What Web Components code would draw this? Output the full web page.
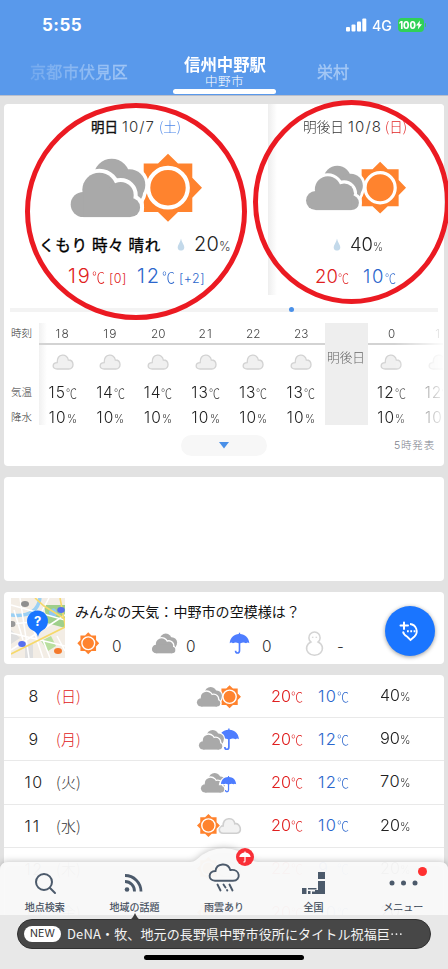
<!DOCTYPE html>
<html lang="ja">
<head>
<meta charset="utf-8">
<title>天気</title>
<style>
html,body{margin:0;padding:0;background:#e2e2e2}
body{font-family:Inter,"Noto Sans CJK JP",sans-serif;width:448px;height:969px;overflow:hidden}
</style>
</head>
<body>
<weather-app></weather-app>
<script>
const define=(name,make,after)=>customElements.define(name,class extends HTMLElement{
  constructor(){super();this.attachShadow({mode:'open'});}
  connectedCallback(){
    if(this.ready)return;this.ready=true;
    this.shadowRoot.innerHTML=make(this);
    if(after)after(this);
  }
});

/* text run: gap before, text, target width, size, colour, weight */
const T=(g,text,w,size,color='#333',weight=300,extra='')=>
  `<fit-text w="${w}" style="margin-left:${g}px;font-size:${text==='℃'?size*1.15:size}px;color:${color};font-weight:${weight};${extra}">${text}</fit-text>`;
const RED='#e02020',BLUE='#2b66cc',JP="font-family:'Noto Sans CJK JP',sans-serif;",MED='-webkit-text-stroke:.35px currentColor;';

/* icon parts */
const backCloud='<circle cx="43.7" cy="26.7" r="18"/><circle cx="61.5" cy="35" r="15.8"/><circle cx="62" cy="42" r="13"/>';
const frontCloud='<circle cx="31.3" cy="39.7" r="17"/><circle cx="52.7" cy="45" r="13"/><circle cx="15.3" cy="54.5" r="12.6"/><circle cx="62.4" cy="57.4" r="9.7"/><rect x="15.3" y="42" width="47" height="25.1"/>';
const clouds=`<g fill="#fff" stroke="#fff" stroke-width="7">${backCloud}</g><g fill="#a9a9a9">${backCloud}</g><g fill="#fff" stroke="#fff" stroke-width="8">${frontCloud}</g><g fill="#a9a9a9">${frontCloud}</g>`;
const sun=(x,y)=>`<g transform="translate(${x} ${y})"><path fill="#ff832e" d="M-24.3-24.3H-10L0-34 10-24.3H24.3V-10L34 0 24.3 10V24.3H10L0 34-10 24.3H-24.3V10L-34 0-24.3-10z"/><circle r="19.8" fill="none" stroke="#fff" stroke-width="4.2"/></g>`;
const umbrella=(x,y,s)=>`<g transform="translate(${x} ${y}) scale(${s})"><path fill="#4e7dff" d="M-30 0C-28-19-16-27-2-28V-32H2V-28C16-27 28-19 30 0Q25-4 20 0Q12-4 3 0H-3Q-12-4-20 0Q-25-4-30 0z"/><path d="M0-3V23Q0 30-6.500 30Q-12 30-12 23" fill="none" stroke="#4e7dff" stroke-width="5"/></g>`;
const pale=(t)=>`<g transform="${t}"><path d="M15 65C-1 65 0 43 15 43C15 17 47 15 51 37C67 32 76 65 56 65z" fill="#f2f2f2" stroke="#cfcfcf" stroke-width="5"/></g>`;
const kinds={
  'cloud-sun':()=>['0 0 140 74',sun(100,37.7)+clouds],
  'cloud-rain':()=>['0 0 140 74',umbrella(92,36,1)+clouds],
  'cloud-drizzle':()=>['0 0 140 74',clouds+'<path d="M56 45C58 28 70 18 85 18V45z" fill="#fff"/><path d="M60 45H78V70H60z" fill="#fff" opacity="0"/>'+umbrella(85,42,.76)],
  'sun-cloud':()=>['0 0 140 74',pale('translate(66 -5) scale(.98 1)')+`<g fill="#fff"><path transform="translate(37 37)" d="M-28-28H-11L0-38 11-28H28V-11L38 0 28 11V28H11L0 38-11 28H-28z"/></g>`+sun(37,37)],
  'sun':()=>['0 0 70 70',sun(35,35)],
  'clouds':()=>['0 4 80 68',clouds],
  'umbrella':()=>['0 0 64 70',umbrella(32,34,1)],
  'overcast':()=>['0 0 22 17','<path d="M5.200 15C-.2 15-.2 8.800 5.200 8.600C5-1 15.500-.8 16.300 6C22.500 6 22.500 15 16.800 15z" fill="#f0f0f0" stroke="#d2d2d2" stroke-width="1.300"/>'],
  'snowman':()=>['0 0 18 24','<g fill="none" stroke="#d4d4d4" stroke-width="1.500"><path d="M5.500 10.500A5.400 5.400 0 1 1 12.500 10.500A7.600 6.800 0 1 1 5.500 10.500z"/></g><path d="M6.500 6h1.500M10 6h1.500" stroke="#d0d0d0"/>'],
  'drop':()=>['0 0 8 14','<path d="M4 0.500Q4.400 3 6.300 6.500C9.200 11.500 6.500 13.500 4 13.500S-1.200 11.500 1.700 6.500Q3.600 3 4 .5z" fill="#c3d9ea"/>']
};
define('weather-icon',el=>{
  const [vb,body]=kinds[el.getAttribute('kind')]();
  return `<style>:host{display:block;flex:none}svg{display:block;overflow:visible}</style><svg width="${el.getAttribute('w')}" height="${el.getAttribute('h')}" viewBox="${vb}">${body}</svg>`;
});

define('status-bar',()=>`<style>
:host{display:flex;height:50px;align-items:center;box-sizing:border-box;padding:0 22px 0 42px;color:#fff}
.g{flex:1}.bat{display:flex;align-items:center;justify-content:center;width:26px;height:14px;border-radius:4px;background:#30d158;margin-left:6px}
.nub{width:1.5px;height:4px;border-radius:0 2px 2px 0;background:#30d158;margin-left:1px}
</style>${T(0,'5:55',40,17,'#fff',700)}<span class="g"></span>
<svg width="21" height="14" viewBox="0 0 21 14" fill="#fff"><rect x="0" y="9" width="4" height="4.500" rx="1"/><rect x="5.500" y="6.500" width="4" height="7" rx="1"/><rect x="11" y="3.500" width="4" height="10" rx="1"/><rect x="16.300" y="0.500" width="4" height="13" rx="1"/></svg>
${T(5,'4G',20,14.500,'#fff',500)}<span class="bat">${T(0,'100',17,10.500,'#fff',800)}<svg width="6" height="10" viewBox="0 0 6 10"><path fill="#fff" d="M4 0.500 0 5.500H2.500L1.800 9.500 6 4.200H3.500z"/></svg></span><span class="nub"></span>`);

define('city-tabs',()=>`<style>
:host{display:grid;grid-template-columns:173px 103px 1fr;height:45px}
.side{padding-top:10px;line-height:24px}
.l{padding-left:30px;-webkit-mask-image:linear-gradient(90deg,transparent 0,rgba(0,0,0,.45) 40px,#000 130px);mask-image:linear-gradient(90deg,transparent 0,rgba(0,0,0,.45) 40px,#000 130px)}
.r{padding-left:41px}
.m{display:flex;flex-direction:column;align-items:center}
.u{width:103px;height:5px;border-radius:3px;background:#fff;margin-top:auto;margin-bottom:1px}
</style><div class="side l">${T(0,'京都市伏見区',98,16,'#a4c8f5',400,MED)}</div>
<div class="m">${T(0,'信州中野駅',82,16.500,'#fff',700,'line-height:20px;margin-top:5px;')}${T(0,'中野市',39,12.500,'#fff',300,'line-height:13px;')}<span class="u"></span></div>
<div class="side r">${T(0,'栄村',32,16,'#a4c8f5',400,MED)}</div>`);

define('wx-card',()=>`<style>:host{display:block;box-sizing:border-box;width:440px;background:#fff;border-radius:4px;margin:0 4px;overflow:hidden;flex:none}</style><slot></slot>`);

define('day-panel',el=>{
  const a=el.getAttribute('day')==='tomorrow';
  return `<style>:host{display:block;height:191px;width:${a?264:176}px;flex:none;box-sizing:border-box}
:host([day=after]){background:linear-gradient(90deg,#eee 0,#fff 9px)}
.r{display:flex;align-items:baseline;height:24px;line-height:24px}
.i{display:flex;align-items:center;height:74px;margin-top:12px}
weather-icon{align-self:center}</style>
<div class="r" style="padding:10px 0 0 ${a?87:35}px">${a?
 T(0,'明日',27,13.500,'#111',400,MED)+T(4,'10/7',33,15,'#333')+T(4,'(土)',22,13.500,'#4b86e8',300,JP):
 T(0,'明後日',41,13.700,'#333')+T(4,'10/8',34,15,'#333')+T(3,'(日)',22,13.500,RED,300,JP)}</div>
<div class="i" style="padding-left:${a?64:36}px"><weather-icon kind="cloud-sun" w="${a?140:106.6}" h="${a?74:56.4}"></weather-icon></div>
<div class="r" style="margin-top:8px;padding-left:${a?34:65}px">${a?T(0,'くもり 時々 晴れ',122,15.500,'#000',400,JP+'margin-left:1px;'+MED):''}<weather-icon kind="drop" w="8" h="13" style="margin-left:${a?16:0}px"></weather-icon>${
 a?T(9,'20',25,20,'#222')+T(0,'%',12,12.500,'#444'):T(9,'40',23,18.500,'#222')+T(0,'%',10,11.500,'#444')}</div>
<div class="r" style="margin-top:8px;padding-left:${a?63:47}px">${a?
 T(1,'19',24,20,RED)+T(0,'℃',13,13,RED,300,JP)+T(4,'[0]',18,12.500,RED)+T(10,'12',25,20,BLUE)+T(0,'℃',13,13,BLUE,300,JP)+T(4,'[+2]',26,12.500,BLUE):
 T(0,'20',23,18.500,RED)+T(0,'℃',11,11,RED,300,JP)+T(14,'10',22,18.500,BLUE)+T(0,'℃',11,11,BLUE,300,JP)}</div>`;
});

define('day-scroller',()=>`<style>:host{display:flex;align-items:center;margin:12px 6px 0;height:6px;background:linear-gradient(#f3f3f3,#f3f3f3) 0 50%/100% 4px no-repeat}
i{display:block;width:5px;height:5px;border-radius:50%;background:#4a90e8;margin:-1px 0 0 279px}</style><i></i>`);

define('hour-col',el=>`<style>:host{display:flex;flex-direction:column;align-items:center;width:47.600px;flex:none}
.h{height:20px;line-height:22px;border-bottom:2px solid #d3d3d3;align-self:stretch;display:flex;justify-content:center}
weather-icon{margin-top:9px}
.r{display:flex;align-items:baseline;height:25px;line-height:25px}</style>
<div class="h">${T(0,el.getAttribute('t'),el.getAttribute('t').length*7.200,12,'#444')}</div>
<weather-icon kind="overcast" w="22" h="17"></weather-icon>
<div class="r" style="margin-top:9px">${T(0,el.getAttribute('temp'),17.500,15.500,'#222')}${T(0,'℃',11,11,'#333',300,JP)}</div>
<div class="r">${T(0,'10',18,15.500,'#222')}${T(0,'%',10,11,'#333')}</div>`);

define('hour-strip',()=>`<style>:host{display:flex;height:102px;margin-top:10px}
.lab{width:35px;flex:none;display:flex;flex-direction:column;padding-left:7px;box-sizing:border-box;line-height:22px}
.s{display:flex;flex:1;overflow:hidden;-webkit-mask-image:linear-gradient(90deg,#000 355px,transparent 408px);mask-image:linear-gradient(90deg,#000 355px,transparent 408px);margin-right:1px;background:linear-gradient(90deg,#f1f1f1,#fff 8px)}
.d{width:43px;flex:none;background:#eee;display:flex;justify-content:center;padding-top:24px;box-sizing:border-box;line-height:22px}</style>
<div class="lab">${T(0,'時刻',21,10.500,'#333',300)}${T(0,'気温',21,10.500,'#333',300,'margin-top:37px;')}${T(0,'降水',21,10.500,'#333',300,'margin-top:3px;')}</div>
<div class="s">${[18,19,20,21,22,23].map((t,i)=>`<hour-col t="${t}" temp="${[15,14,14,13,13,13][i]}"></hour-col>`).join('')}<div class="d">${T(0,'明後日',38,12.700,'#666')}</div><hour-col t="0" temp="12"></hour-col><hour-col t="1" temp="12"></hour-col></div>`);

define('strip-footer',()=>`<style>:host{display:grid;grid-template-columns:177px 86px 1fr;margin-top:10px;height:21px;line-height:21px}
.p{grid-column:2;border-radius:11px;background:#f7f7f7;display:flex;justify-content:center;align-items:center}
.t{padding-left:127px}</style><div class="p"><svg width="10" height="7"><path d="M0 0H10L5 6.500z" fill="#4a90e8"/></svg></div><div class="t">${T(0,'5時発表',41,10.500,'#7d818c')}</div>`);

define('map-thumb',()=>`<style>:host{display:block;width:54px;height:60px;flex:none}svg{display:block}</style>
<svg width="54" height="60" viewBox="0 0 54 60"><rect width="54" height="60" fill="#f3ede5"/>
<path d="M33 7H54V30L36 25z" fill="#9fcf8b"/><path d="M30 43 40 38 45 48 37 53z" fill="#b9df9f"/><path d="M0 32 9 40 0 46zM14 48 22 46V60H14z" fill="#dedede"/>
<path d="M0 17Q26 20 29 0" fill="none" stroke="#9bd0f4" stroke-width="3.500"/><path d="M38 13Q43 8 45 12T44 19Q38 20 38 13" fill="#8fc8f0"/>
<g fill="none" stroke="#fff" stroke-width="1.500"><path d="M0 7 54 22M9 0 18 60M0 35 54 48M32 60 22 30 38 0M0 52 54 17M39 60 32 42M3 12 12 42M46 38 54 53M0 26 22 24"/></g>
<g fill="none" stroke="#f6d96b" stroke-width="1.600"><path d="M0 56 54 29V21L33 8 24 0M49 0 54 26"/></g>
<ellipse cx="14" cy="6" rx="4" ry="3" fill="#8f8f8f"/><ellipse cx="1" cy="26" rx="3.500" ry="3" fill="#999"/><ellipse cx="50" cy="12" rx="3.800" ry="3" fill="#5670ee"/><ellipse cx="11" cy="46" rx="3.800" ry="3" fill="#5670ee"/><ellipse cx="47" cy="53" rx="4" ry="3" fill="#f47a2c"/>
<path d="M27 39Q26 34 21 32A10.500 10.500 0 1 1 32 32Q28 34 27 39z" fill="#1a75ff"/><text x="26.600" y="28" text-anchor="middle" font-family="Inter" font-weight="700" font-size="13" fill="#fff">?</text></svg>`);

define('everyone-weather',()=>`<style>:host{display:flex;height:73px;padding:6px 0 0 7px;box-sizing:border-box}
.c{margin-left:9px;flex:none;width:300px}.t{display:flex;height:24px;line-height:26px}
.r{display:grid;grid-template-columns:77px 78px 76px 60px;height:26px;margin-top:11px;line-height:27px}
.r>div{display:flex;align-items:center}
.f{width:50px;height:50px;border-radius:50%;background:#1a75ff;box-shadow:0 1px 4px rgba(0,0,0,.4);margin:8px 0 0 11px;display:flex;align-items:center;justify-content:center;flex:none}</style>
<map-thumb></map-thumb><div class="c"><div class="t">${T(1,'みんなの天気：中野市の空模様は？',225,14,'#111',400,JP)}</div>
<div class="r"><div style="padding-left:3px"><weather-icon kind="sun" w="22.500" h="22.500" style="margin-top:-6px"></weather-icon>${T(12.5,'0',10,15.500)}</div>
<div><weather-icon kind="clouds" w="27" h="23" style="margin-top:-6px"></weather-icon>${T(8,'0',10,15.500)}</div>
<div><weather-icon kind="umbrella" w="21" h="23" style="margin-top:-6px"></weather-icon>${T(12,'0',10,15.500)}</div>
<div><weather-icon kind="snowman" w="19" h="25" style="margin-top:-6px"></weather-icon>${T(13,'-',8,15)}</div></div></div>
<div class="f"><svg width="22" height="24" viewBox="0 0 22 24" fill="none" stroke="#fff" stroke-width="2"><path d="M5 3.500V10M1.500 6.500H9" stroke-linecap="round"/><path d="M11 5A7.300 7.300 0 0 1 15.500 17.500L11.500 21 8 17.500Q4.500 15.500 4 12.500" stroke-width="1.800"/><path d="M8 12.300H16.500" stroke-dasharray="1.800 1.500"/></svg></div>`);

define('forecast-row',el=>{
  const g=n=>el.getAttribute(n),day=g('d'),red=el.hasAttribute('holiday'),n=day.length;
  return `<style>:host{display:grid;grid-template-columns:20px 31px 141px 75px 47px 62px 1fr;align-items:center;height:43.200px;box-sizing:border-box;border-bottom:1px solid #e9e9e9;line-height:30px}
div{display:flex;align-items:baseline}</style>
<div style="grid-column:2;justify-content:center;margin-left:-11px">${T(0,day,n>1?19:11,16,'#222')}</div>
<div style="margin-left:1px">${T(0,'('+g('w')+')',25,15,red?RED:'#333',300,JP)}</div>
<div><weather-icon kind="${g('icon')}" w="47" h="25" style="margin-left:${g('icon')==='cloud-drizzle'?4:g('icon')==='cloud-rain'?1.5:0}px"></weather-icon></div>
<div>${T(0,g('hi'),20,16.500,RED)}${T(0,'℃',12,11.500,RED,300,JP)}</div>
<div>${T(0,g('lo'),19,16.500,BLUE)}${T(0,'℃',12,11.500,BLUE,300,JP)}</div>
<div>${T(0,g('p'),20,16.500,'#222')}${T(0,'%',10.500,11.500,'#333')}</div>`;
});

const navIcons={
 search:'<circle cx="19" cy="18" r="8" fill="none" stroke="#4c5a6b" stroke-width="2"/><path d="M25 24 30 29" stroke="#4c5a6b" stroke-width="2" stroke-linecap="round"/>',
 feed:'<circle cx="13" cy="25.500" r="2.300" fill="#4c5a6b"/><g fill="none" stroke="#4c5a6b" stroke-width="2.800"><path d="M11 17.500A9.500 9.500 0 0 1 20.500 27.500M11 11.500A16 16 0 0 1 27 27.500"/></g>',
 rain:'<g transform="translate(0 -2.500)" fill="none" stroke="#4c5a6b" stroke-width="1.900" stroke-linecap="round"><path d="M11 19.200C3.500 19.200 4 9.500 11.500 9.500C12.500 1.500 24 .5 26.300 8.500C36.500 7 37.500 19.200 29 19.200z"/><path d="M13.500 23 16.500 29M19.500 23 21.500 26M23 28.500 23.300 29M25.500 23 28.500 29"/></g>',
 japan:'<g fill="#4c5a6b"><path d="M24 8H31V15H24zM24 17H31V30H21V26H24zM8 24H12.500V30H8zM14 24H22.500V25.500H14zM14 27H16.500V30H14zM18 27.500H21V30H18z"/></g>',
 more:'<g fill="#4c5a6b"><circle cx="9" cy="19" r="2.500"/><circle cx="20.500" cy="19" r="2.500"/><circle cx="32" cy="19" r="2.500"/></g>'
};
define('nav-item',el=>`<style>:host{display:flex;flex-direction:column;align-items:center;width:89.600px;position:relative}
svg{display:block;overflow:visible}::slotted(*){position:absolute}</style><svg width="40" height="34" viewBox="0 0 40 34">${navIcons[el.getAttribute('icon')]}</svg>
${T(0,el.getAttribute('label'),+el.getAttribute('lw'),10,'#3f4b5a',400,'line-height:14px;margin-top:2px;-webkit-text-stroke:.15px currentColor;'+JP)}<slot></slot>`);

define('bottom-nav',()=>`<style>:host{display:block;position:absolute;left:0;top:840px;width:448px;height:75px}
.bg{position:absolute;left:0;top:0;width:448px;height:75px;overflow:hidden}
.bg path{filter:drop-shadow(0 -1px 3px rgba(0,0,0,.22))}
.row{position:relative;display:flex;padding-top:24px}
.dot{width:9px;height:9px;border-radius:50%;background:#ff3030;left:60px;top:3px}
.um{left:57px;top:-16px;width:18px;height:18px}</style>
<svg class="bg" viewBox="0 0 448 75"><path d="M0 85V30Q0 22 8 22H190Q193.500 22 196 20A39 39 0 0 1 252 20Q254.500 22 258 22H440Q448 22 448 30V85z" fill="#fafafa" fill-opacity=".965"/></svg>
<div class="row"><nav-item icon="search" label="地点検索" lw="40"></nav-item><nav-item icon="feed" label="地域の話題" lw="50"></nav-item>
<nav-item icon="rain" label="雨雲あり" lw="40"><svg class="um" width="18" height="18" viewBox="0 0 18 18"><circle cx="9" cy="9" r="9" fill="#f92f37"/><path d="M3.300 9C4 5.500 7 4.500 9 4.200C11 4.500 14 5.500 14.700 9zM8.400 3.500H9.600V13Q9.500 15 7.400 14.400L7.200 13.500Q8.400 13.800 8.400 13z" fill="#fff"/></svg></nav-item>
<nav-item icon="japan" label="全国" lw="20"></nav-item><nav-item icon="more" label="メニュー" lw="40"><span class="dot"></span></nav-item></div>`);

define('news-bar',()=>`<style>:host{display:block;position:absolute;left:0;top:915px;width:448px;height:54px;background:#e8e8e8}
.b{display:flex;align-items:center;box-sizing:border-box;width:414px;height:30px;margin:4px 0 0 17px;border-radius:15px;background:#474747;border:1px solid #303030;padding-left:6px;line-height:24px}
.n{display:flex;justify-content:center;align-items:center;width:37px;height:16px;border-radius:8px;background:#fff;line-height:16px}
.tri{position:absolute;left:129px;top:-2px}
.h{width:160px;height:5px;border-radius:3px;background:#000;margin:6px auto 0}</style>
<svg class="tri" width="12" height="8"><path d="M0 7Q3 7 6 0Q9 7 12 7z" fill="#3c3c3c"/></svg>
<div class="b"><span class="n">${T(0,'NEW',25,10.500,'#333',400)}</span>${T(6,'DeNA・牧、地元の長野県中野市役所にタイトル祝福巨',323,13,'#f4f4f4',400,JP)}${T(0,'…',13,13,'#f4f4f4',400,JP)}</div><div class="h"></div>`);

define('mark-rings',()=>`<style>:host{position:absolute;left:0;top:0;display:block;pointer-events:none}svg{display:block}</style>
<svg width="448" height="330" fill="none" stroke="#eb1a22" stroke-width="5"><ellipse cx="136" cy="211.500" rx="108.500" ry="106"/><ellipse cx="351.500" cy="202" rx="96" ry="99.500"/></svg>`);

define('weather-app',()=>`<style>:host{display:flex;flex-direction:column;position:relative;width:448px;height:969px;overflow:hidden;background:#e2e2e2}
header{height:95px;flex:none;background:#5999eb;border-bottom:1px solid #b9bfcc;box-sizing:content-box}
main{display:flex;flex-direction:column;gap:11px;padding-top:8px}
.days{display:flex}</style>
<header><status-bar></status-bar><city-tabs></city-tabs></header>
<main><wx-card style="height:362px"><div class="days"><day-panel day="tomorrow"></day-panel><day-panel day="after"></day-panel></div><day-scroller></day-scroller><hour-strip></hour-strip><strip-footer></strip-footer></wx-card>
<wx-card style="height:104px"></wx-card>
<wx-card style="height:72px"><everyone-weather></everyone-weather></wx-card>
<wx-card style="height:294px">
<forecast-row d="8" w="日" holiday icon="cloud-sun" hi="20" lo="10" p="40"></forecast-row>
<forecast-row d="9" w="月" holiday icon="cloud-rain" hi="20" lo="12" p="90"></forecast-row>
<forecast-row d="10" w="火" icon="cloud-drizzle" hi="20" lo="12" p="70"></forecast-row>
<forecast-row d="11" w="水" icon="sun-cloud" hi="20" lo="10" p="20"></forecast-row>
<forecast-row d="12" w="木" icon="sun-cloud" hi="22" lo="9" p="20"></forecast-row>
<forecast-row d="13" w="金" icon="sun-cloud" hi="20" lo="10" p="20"></forecast-row>
</wx-card></main>
<bottom-nav></bottom-nav><news-bar></news-bar><mark-rings></mark-rings>`);

/* single-line text fitted to its given width: tracked out when short, condensed when long */
define('fit-text',()=>`<style>:host{display:block;flex:none;white-space:nowrap}span{display:inline-block;transform-origin:0 50%}</style><span><slot></slot></span>`,el=>{
  const w=+el.getAttribute('w'),s=el.shadowRoot.querySelector('span'),len=el.textContent.length;
  el.style.width=w+'px';
  const n=s.getBoundingClientRect().width;
  if(n>w)s.style.transform=`scaleX(${w/n})`;
  else if(len>1)s.style.letterSpacing=Math.min((w-n)/len,2)+'px';
});
</script>
</body>
</html>
